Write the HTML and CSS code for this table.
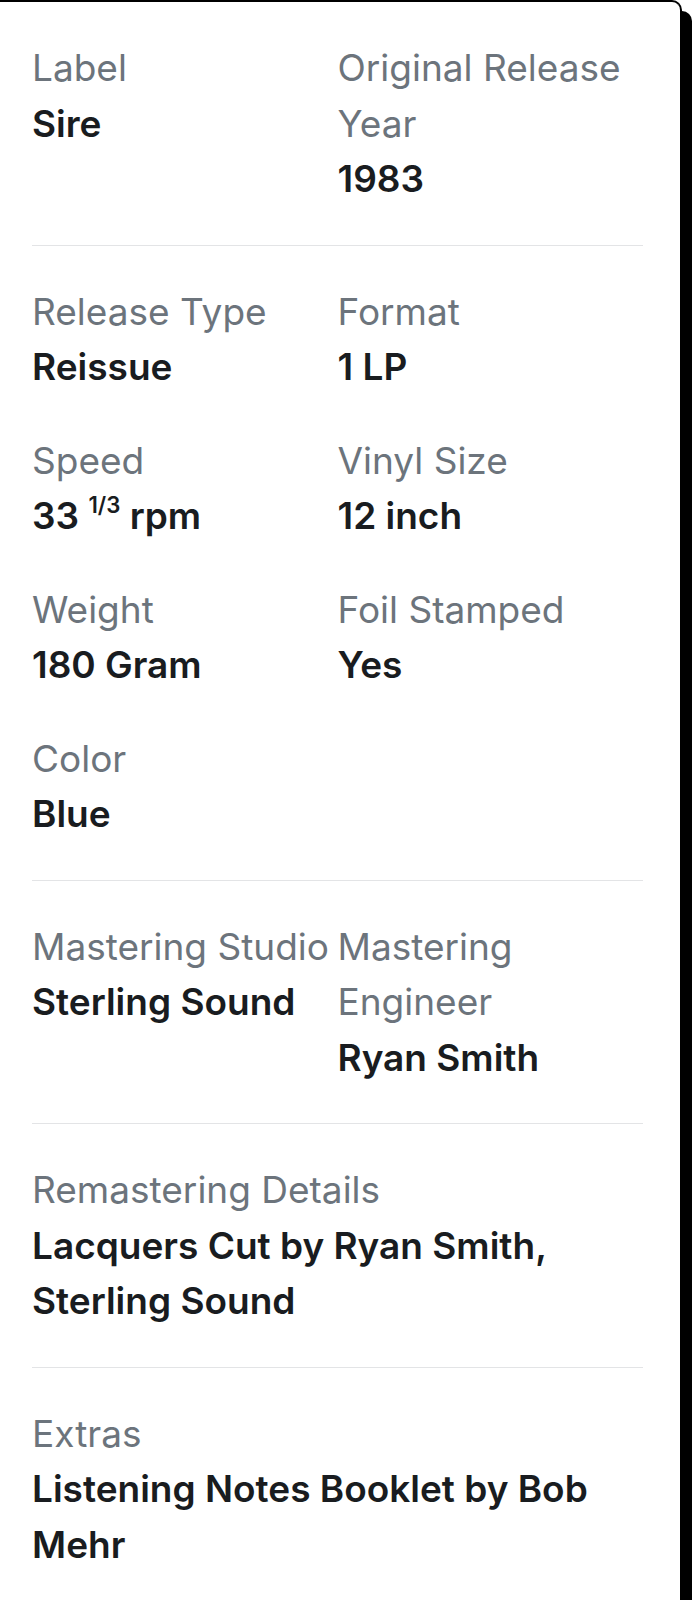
FILE: index.html
```html
<!DOCTYPE html>
<html lang="en">
<head>
<meta charset="utf-8">
<link rel="stylesheet" href="styles.css">
</head>
<body>
<div class="card">
  <section class="section">
    <div class="grid">
      <div class="item"><div class="k">Label</div><div class="v">Sire</div></div>
      <div class="item"><div class="k">Original Release Year</div><div class="v">1983</div></div>
    </div>
  </section>
  <section class="section">
    <div class="grid">
      <div class="item"><div class="k">Release Type</div><div class="v">Reissue</div></div>
      <div class="item"><div class="k">Format</div><div class="v">1 LP</div></div>
      <div class="item"><div class="k">Speed</div><div class="v">33 <sup>1/3</sup> rpm</div></div>
      <div class="item"><div class="k">Vinyl Size</div><div class="v">12 inch</div></div>
      <div class="item"><div class="k">Weight</div><div class="v">180 Gram</div></div>
      <div class="item"><div class="k">Foil Stamped</div><div class="v">Yes</div></div>
      <div class="item"><div class="k">Color</div><div class="v">Blue</div></div>
    </div>
  </section>
  <section class="section">
    <div class="grid">
      <div class="item"><div class="k">Mastering Studio</div><div class="v">Sterling Sound</div></div>
      <div class="item"><div class="k">Mastering Engineer</div><div class="v">Ryan Smith</div></div>
    </div>
  </section>
  <section class="section">
    <div class="item"><div class="k">Remastering Details</div><div class="v">Lacquers Cut by Ryan Smith, Sterling Sound</div></div>
  </section>
  <section class="section last">
    <div class="item"><div class="k">Extras</div><div class="v">Listening Notes Booklet by Bob Mehr</div></div>
  </section>
</div>
</body>
</html>
```
FILE: styles.css
```css
html, body {
  margin: 0;
  padding: 0;
  background: #ffffff;
}
body {
  font-family: "Inter", "Liberation Sans", sans-serif;
  font-size: 37px;
  line-height: 1.5;
  overflow: hidden;
}
.card {
  width: 682px;
  box-sizing: border-box;
  background: #ffffff;
  border-top: 2px solid #000;
  border-right: 2px solid #000;
  border-top-right-radius: 10px;
  box-shadow: 10px 11px 0 #000;
  padding: 0 37px 0 32px;
  min-height: 1700px;
}
.section {
  padding: 38px 0;
  border-bottom: 1px solid #e3e4e6;
}
.section.last {
  border-bottom: none;
}
.grid {
  display: grid;
  grid-template-columns: 1fr 1fr;
  row-gap: 38px;
}
.k {
  color: #6c747c;
  font-weight: 400;
}
.v {
  color: #191c20;
  font-weight: 600;
}
.v sup {
  font-size: 0.6em;
  line-height: 0;
  vertical-align: 0.7em;
  font-weight: 600;
}
```
